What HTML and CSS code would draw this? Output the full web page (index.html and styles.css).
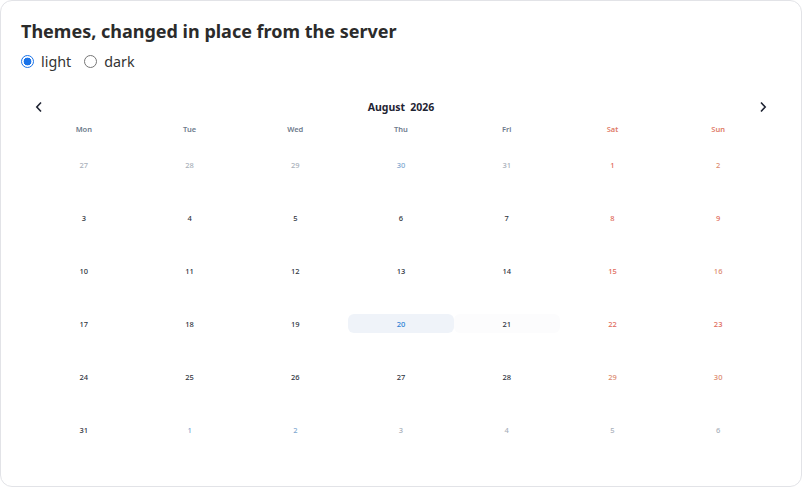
FILE: index.html
```html
<!DOCTYPE html>
<html lang="en">
<head>
<meta charset="utf-8">
<title>Themes</title>
<link rel="stylesheet" href="styles.css">
</head>
<body>
<div class="card">
  <h1 class="title">Themes, changed in place from the server</h1>
  <div class="themes">
    <label class="opt"><span class="radio on"></span>light</label>
    <label class="opt"><span class="radio"></span>dark</label>
  </div>
  <div class="cal">
    <div class="nav">
      <span class="arrow"><svg width="8" height="12" viewBox="0 0 8 12"><path d="M6 1.5 1.8 6 6 10.5" fill="none" stroke="#1f2433" stroke-width="1.6"/></svg></span>
      <span class="month"><span>August</span><span>2026</span></span>
      <span class="arrow"><svg width="8" height="12" viewBox="0 0 8 12"><path d="M2 1.5 6.2 6 2 10.5" fill="none" stroke="#1f2433" stroke-width="1.6"/></svg></span>
    </div>
    <div class="week">
      <span>Mon</span><span>Tue</span><span>Wed</span><span>Thu</span><span>Fri</span><span class="we">Sat</span><span class="we">Sun</span>
    </div>
    <div class="days">
      <div class="c"><span class="d out">27</span></div>
      <div class="c"><span class="d out">28</span></div>
      <div class="c"><span class="d out">29</span></div>
      <div class="c"><span class="d out blue">30</span></div>
      <div class="c"><span class="d out">31</span></div>
      <div class="c"><span class="d we">1</span></div>
      <div class="c"><span class="d we2">2</span></div>

      <div class="c"><span class="d">3</span></div>
      <div class="c"><span class="d">4</span></div>
      <div class="c"><span class="d">5</span></div>
      <div class="c"><span class="d">6</span></div>
      <div class="c"><span class="d">7</span></div>
      <div class="c"><span class="d we">8</span></div>
      <div class="c"><span class="d we">9</span></div>

      <div class="c"><span class="d">10</span></div>
      <div class="c"><span class="d">11</span></div>
      <div class="c"><span class="d">12</span></div>
      <div class="c"><span class="d">13</span></div>
      <div class="c"><span class="d">14</span></div>
      <div class="c"><span class="d we">15</span></div>
      <div class="c"><span class="d we2">16</span></div>

      <div class="c"><span class="d">17</span></div>
      <div class="c"><span class="d">18</span></div>
      <div class="c"><span class="d">19</span></div>
      <div class="c"><span class="d today">20</span></div>
      <div class="c"><span class="d hover">21</span></div>
      <div class="c"><span class="d we">22</span></div>
      <div class="c"><span class="d we">23</span></div>

      <div class="c"><span class="d">24</span></div>
      <div class="c"><span class="d">25</span></div>
      <div class="c"><span class="d">26</span></div>
      <div class="c"><span class="d">27</span></div>
      <div class="c"><span class="d">28</span></div>
      <div class="c"><span class="d we2">29</span></div>
      <div class="c"><span class="d we2">30</span></div>

      <div class="c"><span class="d">31</span></div>
      <div class="c"><span class="d out blue">1</span></div>
      <div class="c"><span class="d out blue">2</span></div>
      <div class="c"><span class="d out">3</span></div>
      <div class="c"><span class="d out">4</span></div>
      <div class="c"><span class="d out">5</span></div>
      <div class="c"><span class="d out">6</span></div>
    </div>
  </div>
</div>
</body>
</html>
```
FILE: styles.css
```css
* { box-sizing: border-box; }
html, body { margin: 0; padding: 0; background: #fff; }
body { font-family: "Noto Sans", "Open Sans", sans-serif; color: #2b2b2b; }

.card {
  width: 802px;
  height: 487px;
  border: 1px solid #e2e3e7;
  border-radius: 12px;
  padding: 17px 20px 0 20px;
  background: #fff;
}

.title {
  margin: 0;
  font-size: 18px;
  font-weight: 700;
  line-height: 26px;
  color: #2b2b2b;
}

.themes {
  display: flex;
  gap: 13px;
  margin-top: 6px;
  height: 22px;
  align-items: center;
}
.opt {
  display: flex;
  align-items: center;
  gap: 7px;
  font-size: 14.3px;
  color: #333;
}
.radio {
  width: 13px;
  height: 13px;
  border-radius: 50%;
  border: 1px solid #767676;
  background: #fff;
}
.radio.on {
  border: 1px solid #1a73e8;
  background: radial-gradient(circle, #1a73e8 0 3.6px, #fff 4.2px);
}

.cal {
  margin-top: 25px;
  padding: 0 10px;
}

.nav {
  display: flex;
  justify-content: space-between;
  align-items: center;
  height: 20px;
  padding: 0 4px;
}
.arrow { display: flex; width: 8px; }
.month {
  display: flex;
  gap: 5px;
  font-size: 10.5px;
  font-weight: 700;
  color: #1f2433;
}

.week {
  display: grid;
  grid-template-columns: repeat(7, 1fr);
  margin-top: 6px;
  height: 12px;
  align-items: center;
}
.week span {
  text-align: center;
  font-size: 7.5px;
  font-weight: 600;
  color: #6d7a8c;
}
.week span.we { color: #e07a66; }

.days {
  display: grid;
  grid-template-columns: repeat(7, 1fr);
  grid-template-rows: repeat(6, 53px);
  margin-top: 3px;
}
.c {
  display: flex;
  align-items: center;
}
.d {
  flex: 1;
  height: 19px;
  display: flex;
  align-items: center;
  justify-content: center;
  border-radius: 6px;
  font-size: 7.5px;
  font-weight: 500;
  color: #2f3440;
}
.d.out { color: #a9b0ba; }
.d.out.blue { color: #7fa8d0; }
.d.we { color: #e06a5a; }
.d.we2 { color: #dc8a6e; }
.d.today { background: #eff3f9; color: #2a7fd4; }
.d.hover { background: #fcfcfd; }
```
